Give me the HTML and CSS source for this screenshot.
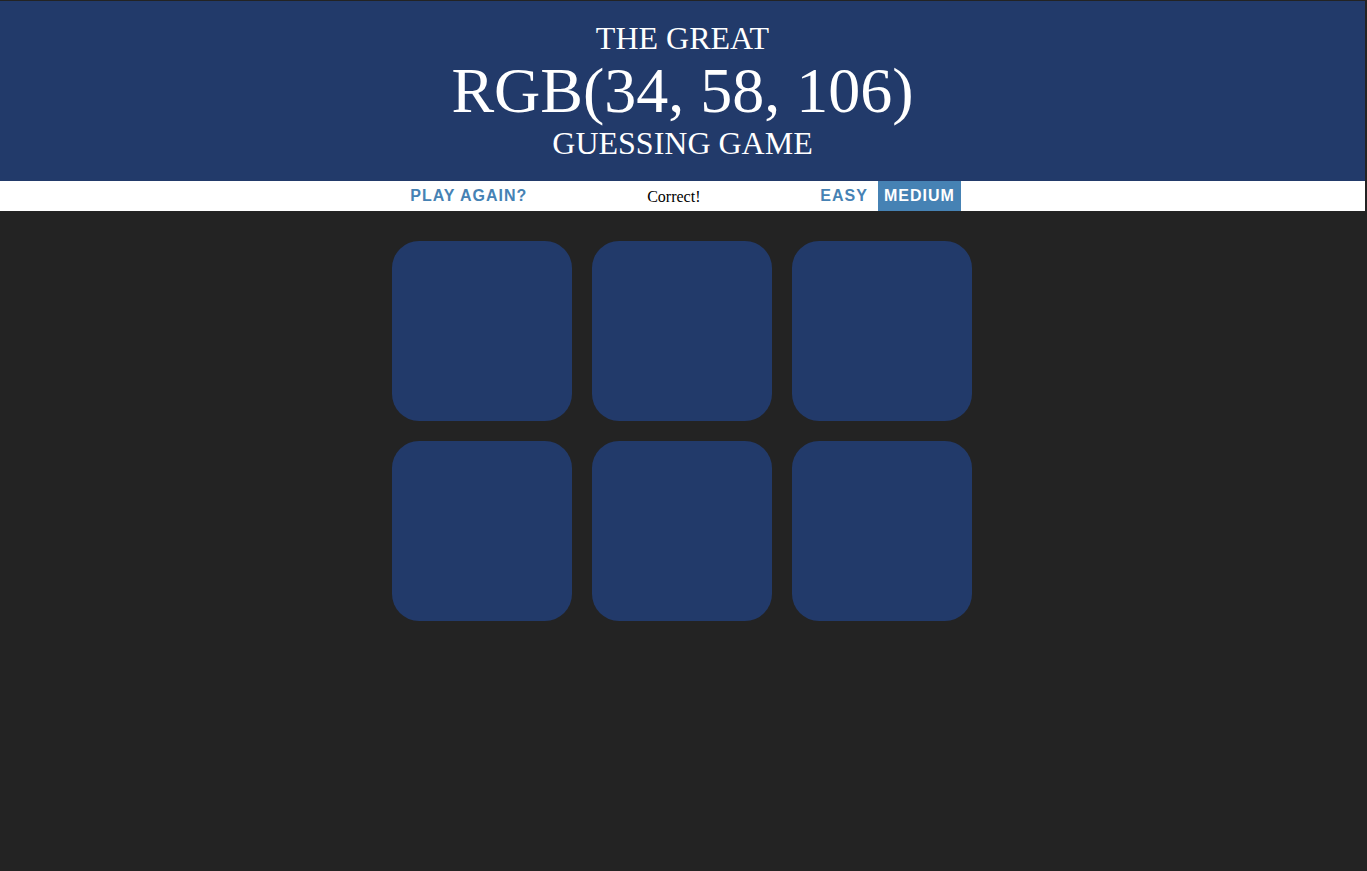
FILE: index.html
```html
<!DOCTYPE html>
<html>
<head>
<meta charset="utf-8">
<title>Color Game</title>
<link rel="stylesheet" href="styles.css">
</head>
<body>
<h1 class="title"><span class="line">The Great</span><span class="line color-display">RGB(34, 58, 106)</span><span class="line">Guessing Game</span></h1>
<div class="stripe">
  <button class="btn">Play Again?</button>
  <span class="message">Correct!</span>
  <button class="btn">Easy</button>
  <button class="btn selected">Medium</button>
</div>
<div class="container">
  <div class="square"></div>
  <div class="square"></div>
  <div class="square"></div>
  <div class="square"></div>
  <div class="square"></div>
  <div class="square"></div>
</div>
</body>
</html>
```
FILE: styles.css
```css
html {
  background: #232323;
}
body {
  margin: 0 2px 0 0;
  padding-top: 1px;
  background: #232323;
  font-family: "Liberation Serif", "Times New Roman", serif;
}
.title {
  margin: 0;
  padding: 20px 0;
  text-align: center;
  font-weight: normal;
  font-size: 32px;
  color: #fff;
  background: rgb(34, 58, 106);
  text-transform: uppercase;
}
.line {
  display: block;
  line-height: 35px;
}
.color-display {
  font-size: 64px;
  line-height: 70px;
}
.stripe {
  height: 30px;
  background: #fff;
  display: flex;
  justify-content: center;
  align-items: stretch;
  gap: 4px;
  color: #000;
  font-size: 16px;
}
.btn {
  border: none;
  background: none;
  padding: 1px 6px;
  margin: 0;
  height: 100%;
  text-transform: uppercase;
  font-family: "Liberation Sans", Arial, sans-serif;
  font-weight: 700;
  font-size: 16px;
  letter-spacing: 1px;
  color: steelblue;
}
.btn.selected {
  color: #fff;
  background: steelblue;
}
.message {
  width: 273px;
  display: flex;
  align-items: center;
  justify-content: center;
  padding-top: 1px;
}
.container {
  width: 580px;
  margin: 30px 0 0 calc(50% - 291px);
  display: grid;
  grid-template-columns: repeat(3, 180px);
  gap: 20px;
}
.square {
  height: 180px;
  background: rgb(34, 58, 106);
  border-radius: 27px;
}
```
